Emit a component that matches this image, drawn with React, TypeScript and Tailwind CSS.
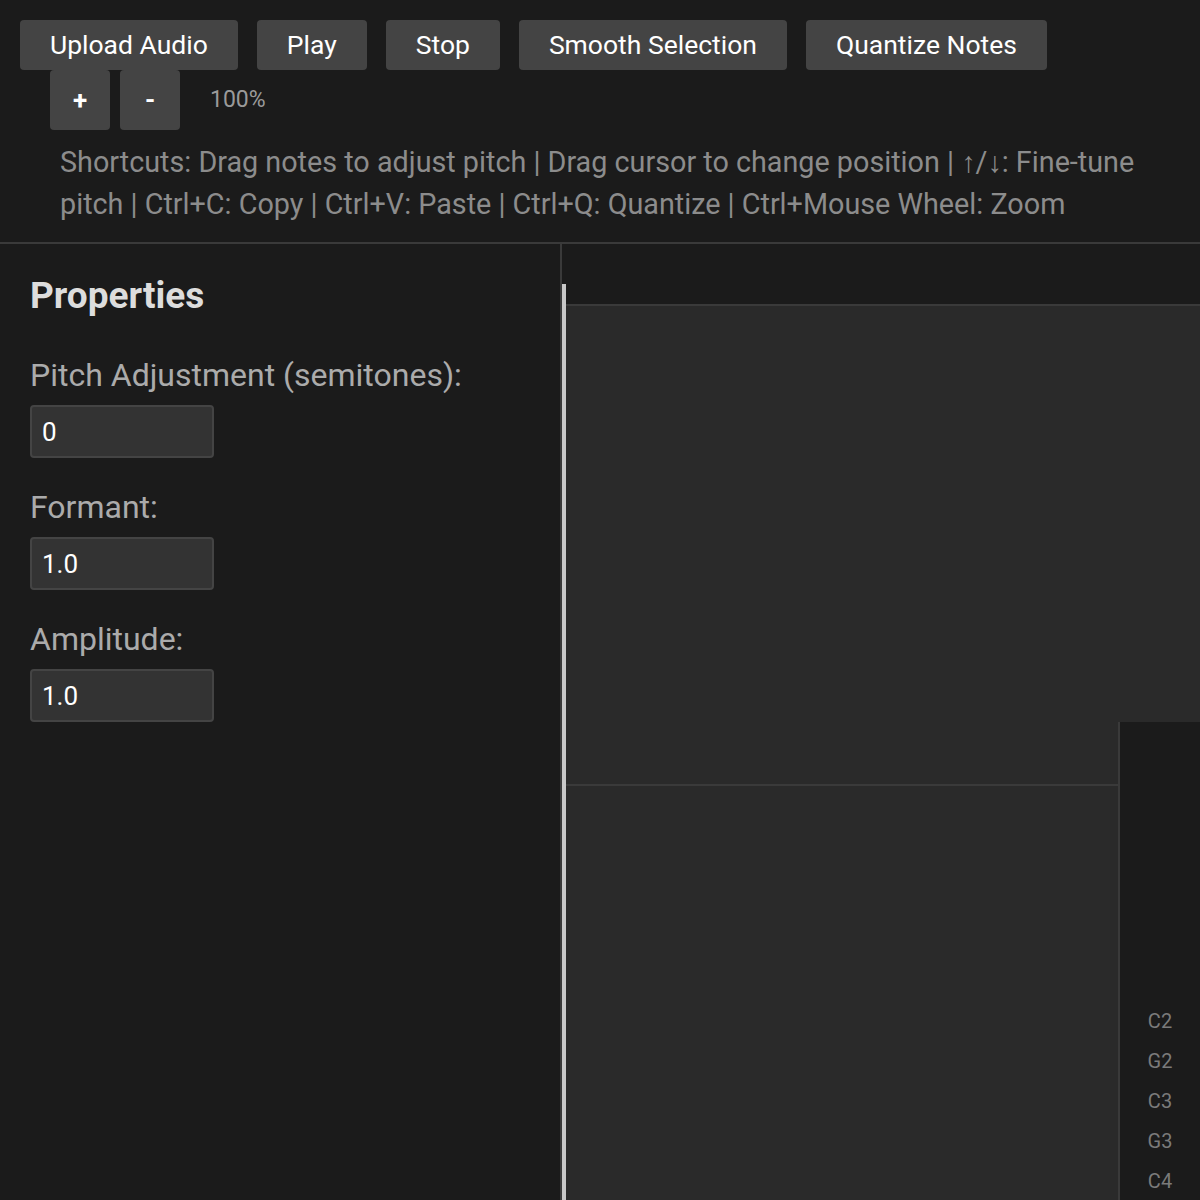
import React from "react";

const buttons = ["Upload Audio", "Play", "Stop", "Smooth Selection", "Quantize Notes"];

const fields = [
    { label: "Pitch Adjustment (semitones):", value: "0" },
    { label: "Formant:", value: "1.0" },
    { label: "Amplitude:", value: "1.0" },
];

const noteLabels = ["C2", "G2", "C3", "G3", "C4"];

const App = () => {
    return (
        <div
            className="h-[1200px] overflow-hidden bg-[#1b1b1b] flex flex-col"
            style={{ fontFamily: "Roboto, 'Noto Sans', sans-serif" }}
        >
            {/* toolbar */}
            <div className="h-[244px] shrink-0 border-b-2 border-[#3a3a3a] pt-5">
                <div className="flex gap-[19px] pl-5">
                    {buttons.map((b) => (
                        <button
                            key={b}
                            className="h-[50px] px-[30px] rounded-[4px] bg-[#444444] text-white text-[26.5px] leading-none"
                        >
                            {b}
                        </button>
                    ))}
                </div>
                <div className="flex items-center pl-[50px]">
                    <button className="w-[60px] h-[60px] rounded-[4px] bg-[#444444] text-white text-[26px] font-bold leading-none">
                        +
                    </button>
                    <button className="ml-[10px] w-[60px] h-[60px] rounded-[4px] bg-[#444444] text-white text-[26px] font-bold leading-none">
                        -
                    </button>
                    <span className="ml-[30px] text-[23px] text-[#9a9a9a]">100%</span>
                </div>
                <p className="mt-[11px] px-[60px] text-[28.75px] leading-[42px] text-[#8c8c8c]">
                    Shortcuts: Drag notes to adjust pitch | Drag cursor to change position | ↑/↓: Fine-tune
                    pitch | Ctrl+C: Copy | Ctrl+V: Paste | Ctrl+Q: Quantize | Ctrl+Mouse Wheel: Zoom
                </p>
            </div>

            <div className="flex flex-1 min-h-0">
                {/* properties panel */}
                <div className="w-[562px] shrink-0 border-r-2 border-[#3a3a3a] px-[30px] pt-8">
                    <h2 className="text-[37px] leading-[40px] font-bold text-[#dddddd]">Properties</h2>
                    <div className="mt-[41px] flex flex-col gap-[31px]">
                        {fields.map((f) => (
                            <div key={f.label}>
                                <label className="block text-[32px] leading-[36px] text-[#ababab]">{f.label}</label>
                                <input
                                    readOnly
                                    value={f.value}
                                    className="mt-3 w-[184px] h-[53px] rounded-[4px] border-2 border-[#444444] bg-[#333333] px-[10px] text-[26px] text-white outline-none"
                                />
                            </div>
                        ))}
                    </div>
                </div>

                {/* editor area */}
                <div className="relative flex-1 flex flex-col">
                    <div className="h-[62px] shrink-0 border-b-2 border-[#3a3a3a]" />
                    <div className="flex-1 bg-[#2a2a2a] flex flex-col">
                        <div className="h-[480px] shrink-0 border-b-2 border-[#3a3a3a]" />
                        <div className="flex-1" />
                    </div>

                    {/* playhead */}
                    <div className="absolute left-0 top-[40px] bottom-0 w-[4px] bg-[#c8c8c8]" />

                    {/* pitch labels */}
                    <div className="absolute right-0 top-[478px] bottom-0 w-[82px] border-l-2 border-[#3a3a3a] bg-[#1b1b1b] pt-[279px]">
                        {noteLabels.map((n) => (
                            <div key={n} className="h-[40px] flex items-center justify-center text-[20px] text-[#7a7a7a]">
                                {n}
                            </div>
                        ))}
                    </div>
                </div>
            </div>
        </div>
    );
};

export default App;
